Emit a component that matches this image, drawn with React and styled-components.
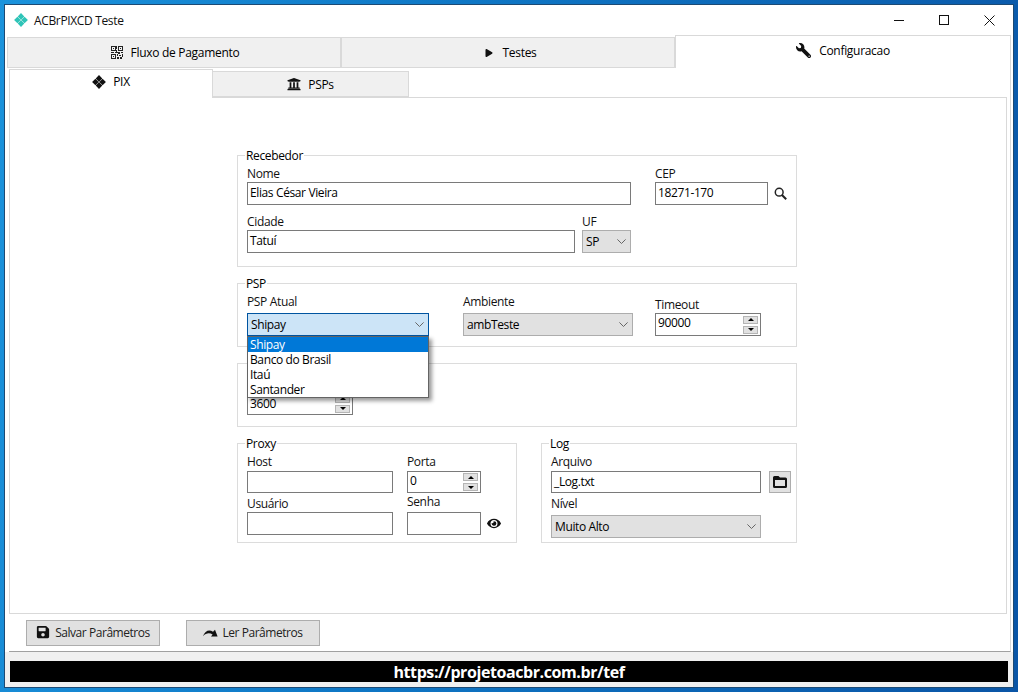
import React from "react";
import styled, { createGlobalStyle } from "styled-components";
import { FaWrench, FaUniversity, FaEye, FaSave, FaPlay } from "react-icons/fa";

const Global = createGlobalStyle`
  html, body { margin: 0; padding: 0; overflow: hidden; }
  * { box-sizing: border-box; }
  body { font-family: "Open Sans", "Noto Sans", sans-serif; font-size: 12px; color: #000; }
`;

const Desktop = styled.div`
  width: 1018px; height: 692px; padding: 4px;
  background: linear-gradient(100deg, #1b93dc 0%, #0f78c6 40%, #0a55a6 100%);
`;
const Window = styled.div`
  width: 1010px; height: 684px; border: 1px solid #1c4a74; background: #fff;
  display: flex; flex-direction: column;
`;
const TitleBar = styled.div`
  height: 30px; flex: none; display: flex; align-items: center; padding-left: 9px;
`;
const AppTitle = styled.span`
  margin-left: 6px; font-size: 12px; letter-spacing: -0.35px; color: #111;
`;
const WinControls = styled.div`
  margin-left: auto; display: flex; align-items: center; padding-right: 18px; gap: 35px;
  svg { display: block; }
`;
const MainTabs = styled.div`
  flex: none; height: 33px; padding: 0 2px; display: flex; align-items: flex-end;
`;
const MainTab = styled.div`
  flex: ${p => (p.$active ? "0 0 336px" : "0 0 334px")};
  height: ${p => (p.$active ? "33px" : "31px")};
  display: flex; align-items: center; justify-content: center; gap: ${p => p.$gap || 8}px;
  background: ${p => (p.$active ? "#fff" : "#f0f0f0")};
  border: 1px solid #d9d9d9; border-bottom: ${p => (p.$active ? "none" : "1px solid #d9d9d9")};
  padding-bottom: ${p => (p.$active ? "3px" : "0")};
  padding-left: ${p => p.$pl || 0}px;
  letter-spacing: -0.3px;
`;
const OuterPanel = styled.div`
  flex: 1; min-height: 0; margin: 0 2px 0 4px; padding-top: 1px;
  border-right: 1px solid #d9d9d9; border-bottom: 1px solid #a0a0a0;
  display: flex; flex-direction: column;
`;
const InnerTabs = styled.div`
  flex: none; height: 28px; display: flex; align-items: flex-end; position: relative; z-index: 1;
`;
const InnerTab = styled.div`
  height: ${p => (p.$active ? "29px" : "26px")};
  width: ${p => p.$w}px;
  display: flex; align-items: center; justify-content: center; gap: 7px;
  margin-bottom: ${p => (p.$active ? "-1px" : "0")};
  background: ${p => (p.$active ? "#fff" : "#f0f0f0")};
  border: 1px solid #d9d9d9;
  border-left: ${p => (p.$active ? "1px solid #d9d9d9" : "none")};
  border-bottom: ${p => (p.$active ? "none" : "1px solid #d9d9d9")};
  padding-bottom: ${p => (p.$active ? "5px" : "0")};
  letter-spacing: -0.3px;
`;
const ContentPanel = styled.div`
  flex: none; width: 998px; height: 517px; border: 1px solid #d9d9d9; padding: 57px 0 0 227px;
`;
const Form = styled.div`
  width: 560px; display: flex; flex-direction: column; gap: 16px;
`;
const Group = styled.section`
  position: relative; border: 1px solid #dcdcdc; padding: ${p => p.$pad};
  width: ${p => p.$w || "auto"}; display: flex; flex-direction: column; gap: ${p => p.$gap || 0}px;
`;
const Legend = styled.span`
  position: absolute; left: 7px; top: -8px; height: 16px; line-height: 15px; padding: 0 1px;
  background: #fff; letter-spacing: -0.35px;
`;
const Row = styled.div`
  display: flex; align-items: flex-end; gap: ${p => p.$gap || 0}px;
`;
const GroupRow = styled.div`
  display: flex; gap: 24px; align-items: stretch;
`;
const Field = styled.div`
  width: ${p => p.$w}px; margin-left: ${p => p.$ml || 0}px; display: flex; flex-direction: column;
  gap: ${p => p.$gap || 0}px; position: relative;
`;
const Label = styled.label`
  height: 16px; line-height: 16px; letter-spacing: -0.35px; color: #111;
`;
const TextBox = styled.div`
  height: ${p => p.$h || 23}px; border: 1px solid #7a7a7a; background: #fff;
  padding: 0 0 2px 2px; display: flex; align-items: center; letter-spacing: -0.38px;
`;
const Combo = styled.div`
  height: 23px; display: flex; align-items: center; justify-content: space-between;
  padding: 0 4px 0 3px; letter-spacing: -0.38px;
  background: ${p => (p.$open ? "#cce4f7" : "#e1e1e1")};
  border: 1px solid ${p => (p.$open ? "#0054a0" : "#adadad")};
`;
const Spin = styled.div`
  height: ${p => p.$h || 23}px; border: 1px solid #7a7a7a; background: #fff;
  display: flex; align-items: stretch; padding: 1px; justify-content: space-between;
`;
const SpinValue = styled.span`
  padding: ${p => p.$pt || 0}px 0 0 1px; line-height: 16px; letter-spacing: -0.38px;
`;
const SpinButtons = styled.div`
  width: 15px; margin-right: 1px; display: flex; flex-direction: column; gap: 2px; justify-content: center;
`;
const SpinButton = styled.div`
  height: 8px; background: #e1e1e1; border: 1px solid #b5b5b5;
  display: flex; align-items: center; justify-content: center;
  &::after {
    content: ""; border-left: 3px solid transparent; border-right: 3px solid transparent;
    ${p => (p.$down ? "border-top: 3px solid #000;" : "border-bottom: 3px solid #000;")}
  }
`;
const DropList = styled.div`
  position: absolute; left: 0; right: 0; top: 42px; z-index: 5; height: 62px;
  background: #fff; border: 1px solid #646464; box-shadow: 3px 3px 4px rgba(0,0,0,.4);
`;
const DropItem = styled.div`
  height: 15px; line-height: 15px; padding-left: 2px; letter-spacing: -0.38px;
  background: ${p => (p.$sel ? "#0078d7" : "transparent")};
  color: ${p => (p.$sel ? "#fff" : "#000")};
`;
const IconSlot = styled.span`
  display: flex; align-items: center; justify-content: center; width: ${p => p.$w || 14}px;
  height: 23px; margin-left: ${p => p.$ml || 0}px;
`;
const SquareButton = styled.div`
  width: 22px; height: 22px; background: #e1e1e1; border: 1px solid #adadad;
  display: flex; align-items: center; justify-content: center;
`;
const BottomBar = styled.div`
  flex: 1; display: flex; gap: 26px; padding: 6px 0 0 17px;
`;
const ActionButton = styled.button`
  width: 134px; height: 26px; background: #e1e1e1; border: 1px solid #adadad; padding: 0 0 2px;
  display: flex; align-items: center; justify-content: center; gap: ${p => p.$gap}px;
  font: inherit; letter-spacing: -0.45px; color: #222;
`;
const Footer = styled.div`
  flex: none; height: 35px; background: #f0f0f0; padding: 9px 5px 5px;
`;
const LinkBar = styled.div`
  height: 21px; background: #000; color: #fff; text-align: center;
  font: bold 16px/23px "Open Sans", sans-serif; letter-spacing: -0.42px;
`;
const FlippedWrench = styled(FaWrench)`
  transform: scaleX(-1);
`;

const Chevron = () => (
  <svg width="9" height="5" viewBox="0 0 9 5"><path d="M.4.4 4.5 4.5 8.6.4" fill="none" stroke="#666" /></svg>
);
const Logo = ({ size = 14, fill = "#2fc4b8" }) => (
  <svg width={size} height={size} viewBox="0 0 14 14">
    <path fill={fill} d="M7 .1 10.3 3.4 7 6.7 3.7 3.4ZM3.4 3.7 6.7 7 3.4 10.3.1 7ZM10.6 3.7 13.9 7 10.6 10.3 7.3 7ZM7 7.3 10.3 10.6 7 13.9 3.7 10.6Z" />
  </svg>
);
const QrIcon = () => (
  <svg width="12" height="13" viewBox="0 0 12 13" fill="#222">
    <path fillRule="evenodd" d="M0 0h5v5H0ZM1 1v3h3V1ZM7 0h5v5H7ZM8 1v3h3V1ZM0 8h5v5H0ZM1 9v3h3V9Z" />
    <path d="M2 2h1v1H2ZM9 2h1v1H9ZM2 10h1v1H2ZM0 6h3v1H0ZM4 6h3v1H4ZM5 0h1v3H5ZM5 4h1v2H5ZM7 6h2v2H7ZM10 6h2v1h-2ZM6 8h1v2H6ZM8 9h2v1H8ZM11 8h1v3h-1ZM6 11h2v2H6ZM9 11h2v2H9Z" />
  </svg>
);
const RedoIcon = () => (
  <svg width="15" height="9" viewBox="0 0 15 9">
    <path d="M0 8C2 3 6 1 10 3.8L12 1.8 14.6 8.4H8L9.6 6.4C6.5 4.6 3 5 0 8Z" fill="#111" />
  </svg>
);
const SearchIcon = () => (
  <svg width="13" height="13" viewBox="0 0 13 13" fill="none" stroke="#222">
    <circle cx="5.2" cy="5.2" r="3.9" strokeWidth="1.5" />
    <path d="M8 8l4.2 4.2" strokeWidth="2" />
  </svg>
);
const FolderIcon = () => (
  <svg width="14" height="12" viewBox="0 0 14 12">
    <path fill="#111" fillRule="evenodd" d="M1.5 0H5.5L7 1.5H12.5A1.5 1.5 0 0 1 14 3V10.5A1.5 1.5 0 0 1 12.5 12H1.5A1.5 1.5 0 0 1 0 10.5V1.5A1.5 1.5 0 0 1 1.5 0ZM2 4V10H12V4Z" />
  </svg>
);

export default function App() {
  return (
    <>
      <Global />
      <Desktop>
        <Window>
          <TitleBar>
            <Logo />
            <AppTitle>ACBrPIXCD Teste</AppTitle>
            <WinControls>
              <svg width="10" height="10" viewBox="0 0 10 10"><path d="M0 5.5h10" stroke="#111" /></svg>
              <svg width="10" height="10" viewBox="0 0 10 10"><rect x=".5" y=".5" width="9" height="9" fill="none" stroke="#111" /></svg>
              <svg width="11" height="11" viewBox="0 0 11 11"><path d="M.5.5l10 10M10.5.5l-10 10" stroke="#111" /></svg>
            </WinControls>
          </TitleBar>
          <MainTabs>
            <MainTab $pl={2}><QrIcon /><span>Fluxo de Pagamento</span></MainTab>
            <MainTab $gap={9} $pl={6}><FaPlay size={8} color="#111" /><span>Testes</span></MainTab>
            <MainTab $active><FlippedWrench size={15} color="#111" /><span>Configuracao</span></MainTab>
          </MainTabs>
          <OuterPanel>
            <InnerTabs>
              <InnerTab $active $w={204}><Logo fill="#111" /><span>PIX</span></InnerTab>
              <InnerTab $w={196}><FaUniversity size={14} color="#111" /><span>PSPs</span></InnerTab>
            </InnerTabs>
            <ContentPanel>
              <Form>
                <Group $pad="10px 0 13px 9px" $gap={9}>
                  <Legend>Recebedor</Legend>
                  <Row>
                    <Field $w={384}><Label>Nome</Label><TextBox>Elias César Vieira</TextBox></Field>
                    <Field $w={113} $ml={24}><Label>CEP</Label><TextBox>18271-170</TextBox></Field>
                    <IconSlot $ml={5}><SearchIcon /></IconSlot>
                  </Row>
                  <Row>
                    <Field $w={328}><Label>Cidade</Label><TextBox>Tatuí</TextBox></Field>
                    <Field $w={49} $ml={7}><Label>UF</Label><Combo><span>SP</span><Chevron /></Combo></Field>
                  </Row>
                </Group>
                <Group $pad="10px 0 10px 9px">
                  <Legend>PSP</Legend>
                  <Row>
                    <Field $w={182} $gap={3}>
                      <Label>PSP Atual</Label>
                      <Combo $open><span>Shipay</span><Chevron /></Combo>
                      <DropList>
                        <DropItem $sel>Shipay</DropItem>
                        <DropItem>Banco do Brasil</DropItem>
                        <DropItem>Itaú</DropItem>
                        <DropItem>Santander</DropItem>
                      </DropList>
                    </Field>
                    <Field $w={170} $ml={34} $gap={3}><Label>Ambiente</Label><Combo><span>ambTeste</span><Chevron /></Combo></Field>
                    <Field $w={106} $ml={22}>
                      <Label>Timeout</Label>
                      <Spin><SpinValue>90000</SpinValue><SpinButtons><SpinButton /><SpinButton $down /></SpinButtons></Spin>
                    </Field>
                  </Row>
                </Group>
                <Group $pad="28px 0 11px 9px">
                  <Field $w={106}>
                    <Spin><SpinValue $pt={2}>3600</SpinValue><SpinButtons><SpinButton /><SpinButton $down /></SpinButtons></Spin>
                  </Field>
                </Group>
                <GroupRow>
                  <Group $w="280px" $pad="10px 0 7px 9px" $gap={1}>
                    <Legend>Proxy</Legend>
                    <Row>
                      <Field $w={146} $gap={1}><Label>Host</Label><TextBox $h={22} /></Field>
                      <Field $w={74} $ml={14} $gap={1}>
                        <Label>Porta</Label>
                        <Spin $h={22}><SpinValue>0</SpinValue><SpinButtons><SpinButton /><SpinButton $down /></SpinButtons></Spin>
                      </Field>
                    </Row>
                    <Row>
                      <Field $w={146}><Label>Usuário</Label><TextBox /></Field>
                      <Field $w={74} $ml={14} $gap={2}><Label>Senha</Label><TextBox /></Field>
                      <IconSlot $ml={6}><FaEye size={15} color="#111" /></IconSlot>
                    </Row>
                  </Group>
                  <Group $w="256px" $pad="10px 0 4px 9px" $gap={3}>
                    <Legend>Log</Legend>
                    <Row>
                      <Field $w={210} $gap={1}><Label>Arquivo</Label><TextBox $h={22}>_Log.txt</TextBox></Field>
                      <Field $w={22} $ml={8}><SquareButton><FolderIcon /></SquareButton></Field>
                    </Row>
                    <Field $w={210} $gap={3}><Label>Nível</Label><Combo><span>Muito Alto</span><Chevron /></Combo></Field>
                  </Group>
                </GroupRow>
              </Form>
            </ContentPanel>
            <BottomBar>
              <ActionButton $gap={5}><FaSave size={14} color="#111" />Salvar Parâmetros</ActionButton>
              <ActionButton $gap={4}><RedoIcon />Ler Parâmetros</ActionButton>
            </BottomBar>
          </OuterPanel>
          <Footer><LinkBar>https://projetoacbr.com.br/tef</LinkBar></Footer>
        </Window>
      </Desktop>
    </>
  );
}
